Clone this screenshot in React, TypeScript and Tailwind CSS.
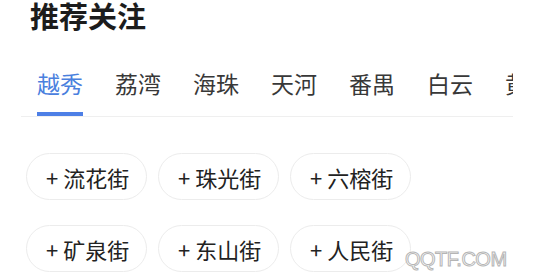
import React from "react";

const tabs = ["越秀", "荔湾", "海珠", "天河", "番禺", "白云", "黄埔"];
const rows = [
  ["流花街", "珠光街", "六榕街"],
  ["矿泉街", "东山街", "人民街"],
];

export default function App() {
  return (
    <div className="relative w-[534px] h-[275px] overflow-hidden bg-white font-['Noto_Sans_CJK_SC','Noto_Sans',sans-serif]">
      <div className="-mt-[6.5px] pl-[30px] text-[29px] leading-[42px] font-bold text-[#1c1c1c]">推荐关注</div>
      <div className="mx-[21px] mt-[30px] border-b border-[#efefef] overflow-hidden">
        <div className="flex gap-[32px] pl-[16px] whitespace-nowrap">
          {tabs.map((t, i) => (
            <div key={t} className="flex flex-col shrink-0">
              <span
                className={
                  "text-[23px] leading-[34px] " +
                  (i === 0 ? "text-[#4a80de]" : "text-[#383838]")
                }
              >
                {t}
              </span>
              <div className={"mt-[12.5px] h-[4px] " + (i === 0 ? "bg-[#4d7fe6]" : "bg-transparent")} />
            </div>
          ))}
        </div>
      </div>
      <div className="flex flex-col gap-[25px] mt-[36px] pl-[26px]">
        {rows.map((r, ri) => (
          <div key={ri} className="flex gap-[11px]">
            {r.map((c) => (
              <div
                key={c}
                className="w-[121px] h-[47px] rounded-full border-[1.5px] border-[#ececec] flex items-center pl-[19px] text-[22px] leading-[32px] text-[#222] whitespace-nowrap"
              >
                + {c}
              </div>
            ))}
          </div>
        ))}
      </div>
      <div className="absolute left-[405px] top-[247.5px] font-['Liberation_Sans',sans-serif] text-[20px] leading-[23px] text-white [-webkit-text-stroke:1px_#b5b5b5] tracking-[-0.5px]">
        QQTF.COM
      </div>
    </div>
  );
}
